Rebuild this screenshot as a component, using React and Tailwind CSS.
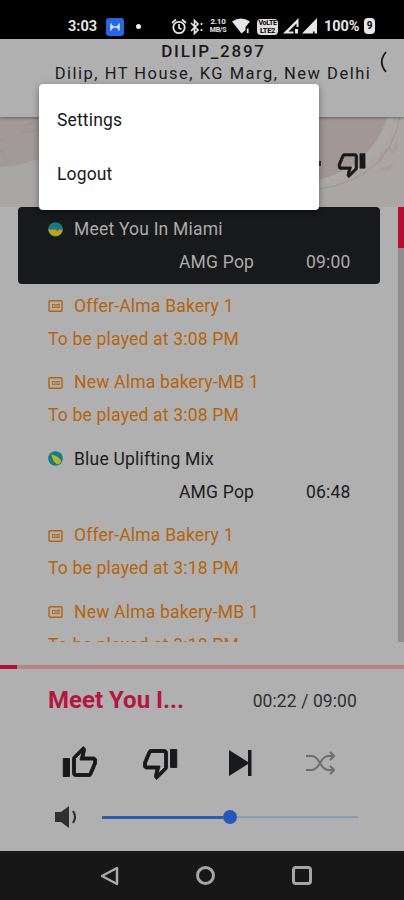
import React, { useState } from "react";

const tracks = [
  { type: "song", title: "Meet You In Miami", artist: "AMG Pop", duration: "09:00" },
  { type: "ad", title: "Offer-Alma Bakery 1", time: "3:08 PM" },
  { type: "ad", title: "New Alma bakery-MB 1", time: "3:08 PM" },
  { type: "song", title: "Blue Uplifting Mix", artist: "AMG Pop", duration: "06:48" },
  { type: "ad", title: "Offer-Alma Bakery 1", time: "3:18 PM" },
  { type: "ad", title: "New Alma bakery-MB 1", time: "3:18 PM" },
];

const ThumbUp = ({ className }) => (
  <svg viewBox="0 0 24 24" fill="currentColor" stroke="currentColor" strokeWidth="0.6" className={className}>
    <path d="M9 21h9c.83 0 1.54-.5 1.84-1.22l3.02-7.05c.09-.23.14-.47.14-.73v-2c0-1.1-.9-2-2-2h-6.31l.95-4.57.03-.32c0-.41-.17-.79-.44-1.06L14.17 1 7.58 7.59C7.22 7.95 7 8.45 7 9v10c0 1.1.9 2 2 2zM9 9l4.34-4.34L12 10h9v2l-3 7H9V9zM0.800 9h4.200v12h-4.200z" />
  </svg>
);

const ThumbDown = ({ className }) => (
  <svg viewBox="0 0 24 24" fill="currentColor" stroke="currentColor" strokeWidth="0.6" className={className}>
    <path d="M15 3H6c-.83 0-1.54.5-1.84 1.22l-3.02 7.05c-.09.23-.14.47-.14.73v2c0 1.1.9 2 2 2h6.31l-.95 4.57-.03.32c0 .41.17.79.44 1.06L9.83 23l6.59-6.59c.36-.36.58-.86.58-1.41V5c0-1.1-.9-2-2-2zm0 12l-4.34 4.34L12 14H3v-2l3-7h9v10zm4-12h4.200v12h-4.200z" />
  </svg>
);

const AdIcon = () => (
  <svg viewBox="0 0 16 14" className="w-4 h-3.5" fill="none" stroke="currentColor">
    <rect x="1" y="1.8" width="13" height="10.4" rx="1" strokeWidth="1.4" />
    <path d="M4 5.5h3.5M8.500 5.500h3M4 8.500h3.500M8.500 8.500h3M4.500 5v4M7 5v4M9 5v4M11 4.500v4.500" strokeWidth="0.9" />
  </svg>
);

const SongIcon = ({ active }) => (
  <svg viewBox="0 0 16 16" className="w-4 h-4">
    <circle cx="7.5" cy="7.5" r="7.3" fill="#177b83" />
    {active ? (
      <path d="M.3 7.500h7l2 1.5 2-1.5h3.5a7.3 7.3 0 0 1-14.5 0z" fill="#cf9c12" />
    ) : (
      <path d="M3.500 3.500c4 1 7 2.500 9.500 5.500l-.5 3-3 1.500C6 11.500 4 8 3.500 3.500z" fill="#b8b02f" />
    )}
  </svg>
);

const StatusBar = () => (
  <div className="h-[39px] shrink-0 bg-black text-[#e6e6e6] flex items-start pt-[19px] pl-[68px]">
    <span className="w-[37px] text-[14.5px] leading-4 font-bold">3:03</span>
    <svg viewBox="0 0 18 18" className="w-[18px] h-[18px] -mt-[1.5px] ml-px">
      <rect width="18" height="18" rx="3" fill="#2866e2" />
      <path d="M5 6v6M13 6v6M6.500 8v2M11.500 8v2M8 9h2" stroke="#dce7ff" strokeWidth="1.5" strokeLinecap="round" />
    </svg>
    <span className="w-[5px] h-[5px] mt-[5px] ml-3 rounded-full bg-[#eee]"></span>
    <svg viewBox="0 0 32 18" className="w-8 h-[18px] ml-7.5 -mt-px" fill="none" stroke="currentColor">
      <circle cx="8" cy="9.500" r="5.700" strokeWidth="1.800" />
      <path d="M8 6v4l2.500 1.300M1 5l4-3.500M15 5l-4-3.500" strokeWidth="1.700" />
      <path d="M20 5l7 7-3.500 3.500V2.500L27 6l-7 7M30.500 5v2M30.500 11v2" strokeWidth="1.700" />
    </svg>
    <span className="w-[18px] ml-[6px] -mt-px text-[8px] font-bold text-center flex flex-col tracking-[-0.3px]">
      <span className="h-2 leading-2">2.10</span>
      <span className="h-2 leading-2 text-[7px]">MB/S</span>
    </span>
    <svg viewBox="0 0 18 16" className="w-[18px] h-4 ml-[5px] -mt-px" fill="currentColor">
      <path d="M0 3.500Q9-2.500 18 3.500L13.500 9v3l-4 3.500z" />
      <path d="M14.800 10.500h1.800v4.500h-1.800z" />
    </svg>
    <span className="w-[21px] h-4 ml-[7px] rounded-sm bg-[#dedede] text-black font-bold text-center flex flex-col tracking-[-0.3px]">
      <span className="h-2 leading-2 text-[7px]">VoLTE</span>
      <span className="h-2 leading-2 text-[7.5px]">LTE2</span>
    </span>
    <svg viewBox="0 0 36 16" className="w-9 h-4 ml-[5px] -mt-px" fill="currentColor">
      <path d="M0 15.500L15.500 0v9h-2V5.500L5.500 13.500h5v2z" />
      <path d="M12 11h3v4.500h-3zM19 15.500L34 0v15.500h-2.500v-2h-1.500v2z" />
    </svg>
    <span className="ml-[5px] w-9 text-[14.5px] leading-4 font-bold tracking-[-0.1px]">100%</span>
    <span className="ml-1 -mt-px w-[11px] h-4 rounded-sm bg-[#e6e6e6] text-black text-[10px] leading-4 font-bold text-center">9</span>
  </div>
);

const TrackRow = ({ track, active }) => {
  if (track.type === "ad") {
    return (
      <li className="h-[76.5px] pt-1.5 pl-[30px] text-[#b4640f]">
        <div className="flex items-center h-[33px]">
          <AdIcon />
          <span className="ml-2.5">{track.title}</span>
        </div>
        <div className="leading-8">To be played at {track.time}</div>
      </li>
    );
  }
  return (
    <li className={active ? "h-[76.5px] pt-1.5 pl-[30px] rounded bg-[#17191a] text-[#acacac]" : "h-[76.5px] pt-1.5 pl-[30px] text-[#1c1c1d]"}>
      <div className="flex items-center h-[33px]">
        <SongIcon active={active} />
        <span className="ml-2.5">{track.title}</span>
      </div>
      <div className="flex leading-8">
        <span className="ml-[131px] w-[127px]">{track.artist}</span>
        <span>{track.duration}</span>
      </div>
    </li>
  );
};

const App = () => {
  const [menuOpen] = useState(true);
  const [progress] = useState(4.2);

  return (
    <div className="relative w-[404px] h-[900px] overflow-hidden flex flex-col bg-[#b0b0b0] font-[Roboto,sans-serif] text-[#18191a]">
      <StatusBar />

      <header className="relative z-10 h-[78px] shrink-0 bg-[#b0b0b0] shadow-[0_1px_3px_rgba(0,0,0,0.4)] text-center">
        <h1 className="pl-[23px] pt-px text-[17px] leading-[22px] font-medium tracking-[1.75px]">DILIP_2897</h1>
        <p className="pl-[22px] text-[16.5px] leading-[24px] tracking-[1.5px] whitespace-nowrap">Dilip, HT House, KG Marg, New Delhi</p>
        <svg viewBox="0 0 8 22" className="absolute left-[380px] top-[12px] w-2 h-[22px]" fill="none" stroke="currentColor" strokeWidth="1.8">
          <path d="M6 1Q-2.500 11 6 21" />
        </svg>
      </header>

      {/* Artwork strip */}
      <section className="relative h-[90px] shrink-0 bg-[#aaa6a5] flex justify-end items-start">
        <svg viewBox="0 0 404 90" className="absolute inset-0 w-full h-full">
          <path d="M0 0H40V41Q22 49 0 50z" fill="#a29a99" />
          <path d="M300 0H387Q372 48 319 63z" fill="#a29796" />
          <path d="M392 0Q377 52 319 67" fill="none" stroke="#aea8a6" strokeWidth="7" />
          <path d="M400 0Q388 62 319 72M25 9q8-5 15-3M22 16l17-4M0 24l5-4M0 34l5 3" fill="none" stroke="#8f8584" strokeWidth=".8" opacity=".7" />
          <path d="M379 45q9-18 12-12t6-7M380 51q8 4 12-4" fill="none" stroke="#a0928f" strokeWidth="3" opacity=".4" />
          <path d="M319 44h2v5h-2z" fill="#333" />
        </svg>
        <ThumbDown className="relative w-[29px] h-[29px] mt-[33px] mr-[38px]" />
      </section>

      <main className="h-[435px] shrink-0 flex overflow-hidden">
        <ul className="ml-[18px] w-[362px] text-[17.5px] tracking-[0.2px]">
          {tracks.map((track, index) => (
            <TrackRow key={index} track={track} active={index === 0} />
          ))}
        </ul>
        <div className="ml-auto w-1.5 bg-[#8e8e8e]">
          <div className="h-[41px] bg-[#b60d30]"></div>
        </div>
      </main>

      {/* Player */}
      <footer className="mt-[23px] h-[186px] shrink-0">
        <div className="h-1 bg-[#b88388]">
          <div style={{ width: `${progress}%` }} className="h-full bg-[#ad1237]"></div>
        </div>
        <div className="flex justify-between items-center h-[62px] pl-12 pr-[47px]">
          <span className="text-[24px] font-bold text-[#b3173f]">Meet You I...</span>
          <span className="pt-0.5 text-[17.5px] tracking-[0.1px] text-[#303030]">00:22 / 09:00</span>
        </div>
        <div className="flex items-center h-[64px] pl-[61.5px]">
          <ThumbUp className="w-9 h-9" />
          <ThumbDown className="w-9 h-9 ml-[44.5px]" />
          <svg viewBox="0 0 24 28" className="w-6 h-7 ml-[51px]" fill="currentColor">
            <path d="M0 1l19 12V1h3.500v26H19V15L0 27z" />
          </svg>
          <svg viewBox="0 0 30 24" className="w-[30px] h-6 ml-[53px] text-[#6d6d6d]" fill="none" stroke="currentColor" strokeWidth="2" strokeLinejoin="round">
            <path d="M0 5h6c8 0 8 14 16 14h6M0 19h6c8 0 8-14 16-14h6M24 1l4 4-4 4M24 15l4 4-4 4" />
          </svg>
        </div>
        <div className="flex items-center h-[44px] pl-[54px]">
          <svg viewBox="0 0 24 24" className="w-6 h-6 text-[#303030]" fill="currentColor">
            <path d="M1 7h6l8-6v22l-8-6H1z" />
            <path d="M19 6q4 6 0 12" fill="none" stroke="currentColor" strokeWidth="2.200" />
          </svg>
          <div className="ml-6 w-[121px] h-[3px] bg-[#2b5eac]"></div>
          <div className="w-3.5 h-3.5 rounded-full bg-[#2459bb]"></div>
          <div className="w-[121px] h-0.5 bg-[#889bbd]"></div>
        </div>
      </footer>

      <nav className="h-[49px] shrink-0 bg-[#171717] text-[#aaa] flex items-center pl-[100px]">
        <svg viewBox="0 0 20 20" className="w-5 h-5" fill="none" stroke="currentColor" strokeWidth="2.5" strokeLinejoin="round">
          <path d="M17 2v16L2 10z" />
        </svg>
        <div className="ml-[76px] w-[19px] h-[19px] rounded-full border-[3px] border-[#a6a6a6]"></div>
        <div className="ml-[77px] w-5 h-[19px] rounded border-[3px] border-[#a6a6a6]"></div>
      </nav>

      {menuOpen && (
        <div className="absolute z-20 left-[39px] top-[84px] w-[280px] h-[126px] rounded bg-white shadow-[0_2px_7px_rgba(0,0,0,0.4)] py-[9px] px-[18px] text-[17.5px] leading-[54px] tracking-[0.15px]">
          <div>Settings</div>
          <div>Logout</div>
        </div>
      )}
    </div>
  );
};

export default App;
